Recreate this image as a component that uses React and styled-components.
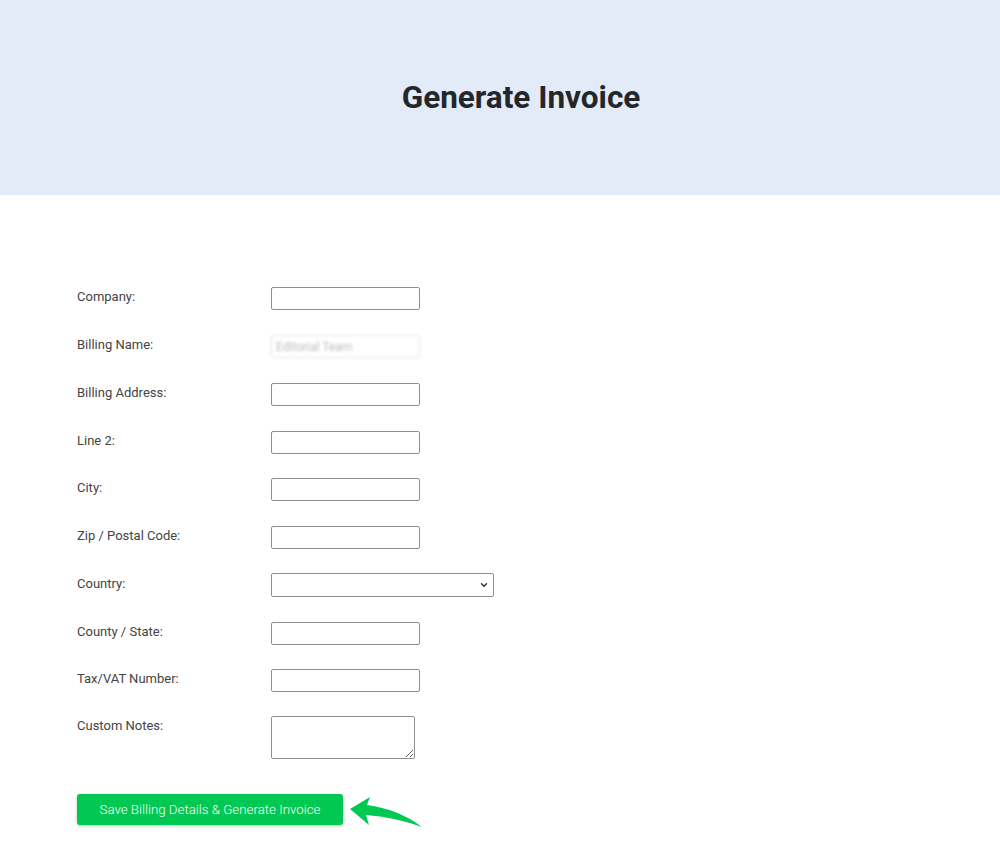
import React from "react";
import styled, { createGlobalStyle } from "styled-components";
import { ChevronDown } from "lucide-react";

const fields = [
  { label: "Company:", type: "input" },
  { label: "Billing Name:", type: "blurred" },
  { label: "Billing Address:", type: "input" },
  { label: "Line 2:", type: "input" },
  { label: "City:", type: "input" },
  { label: "Zip / Postal Code:", type: "input" },
  { label: "Country:", type: "select" },
  { label: "County / State:", type: "input" },
  { label: "Tax/VAT Number:", type: "input" },
  { label: "Custom Notes:", type: "textarea" },
];

const App = () => {
  return (
    <>
      <GlobalStyle />
      <Header>
        <Title>Generate Invoice</Title>
      </Header>
      <Form onSubmit={(e) => e.preventDefault()}>
        {fields.map((f) => (
          <Row key={f.label} top={f.type === "textarea"}>
            <Label top={f.type === "textarea"}>{f.label}</Label>
            {f.type === "input" && <TextInput />}
            {f.type === "blurred" && <BlurInput defaultValue="Editorial Team" />}
            {f.type === "select" && (
              <SelectWrap>
                <Select>
                  <option></option>
                </Select>
                <Chevron size={10} strokeWidth={3.5} />
              </SelectWrap>
            )}
            {f.type === "textarea" && <TextArea />}
          </Row>
        ))}
        <ButtonRow>
          <SaveBtn type="submit">Save Billing Details &amp; Generate Invoice</SaveBtn>
          {/* pointing arrow */}
          <svg width="80" height="40" viewBox="0 0 80 40">
            <path
              d="M4 19 L24 7 L21 15 Q52 19 76 37 Q48 27 20 25 L23 35 Z"
              fill="#00c853"
            />
          </svg>
        </ButtonRow>
      </Form>
    </>
  );
};

const GlobalStyle = createGlobalStyle`
  body {
    margin: 0;
    background: #fff;
    font-family: Roboto, "Liberation Sans", sans-serif;
  }
`;
const Header = styled.header`
  display: flex;
  justify-content: center;
  align-items: center;
  height: 195px;
  background-color: #e3eaf8;
`;
const Title = styled.h1`
  margin: 0 0 0 42px;
  font-size: 31.5px;
  font-weight: 700;
  color: #23272b;
`;
const Form = styled.form`
  display: flex;
  flex-direction: column;
  padding: 80px 0 40px 77px;
`;
const Row = styled.div`
  display: grid;
  grid-template-columns: 194px auto;
  align-items: ${(p) => (p.top ? "start" : "center")};
  height: ${(p) => (p.top ? "54px" : "47.75px")};
  padding-top: ${(p) => (p.top ? "11px" : "0")};
  box-sizing: border-box;
`;
const Label = styled.label`
  font-size: 13px;
  color: #444;
  margin-top: ${(p) => (p.top ? "2px" : "-4px")};
`;
const TextInput = styled.input`
  box-sizing: border-box;
  width: 149px;
  height: 23px;
  border: 1px solid #8f8f8f;
  border-radius: 2px;
  padding: 0 4px;
  font: 12px Roboto, sans-serif;
`;
const BlurInput = styled(TextInput)`
  border-color: #e2e2e2;
  color: #bbb;
  filter: blur(1.5px);
`;
const SelectWrap = styled.div`
  position: relative;
  width: 223px;
  height: 24px;
`;
const Select = styled.select`
  box-sizing: border-box;
  width: 223px;
  height: 24px;
  border: 1px solid #8f8f8f;
  border-radius: 2px;
  background: #fff;
  appearance: none;
`;
const Chevron = styled(ChevronDown)`
  position: absolute;
  right: 5px;
  top: 7px;
  color: #333;
  pointer-events: none;
`;
const TextArea = styled.textarea`
  display: block;
  box-sizing: border-box;
  width: 144px;
  height: 43px;
  border: 1px solid #8f8f8f;
  border-radius: 2px;
  resize: both;
`;
const ButtonRow = styled.div`
  display: flex;
  align-items: center;
  gap: 3px;
  margin-top: 31px;
`;
const SaveBtn = styled.button`
  width: 266px;
  height: 31px;
  padding: 0;
  border: none;
  border-radius: 3px;
  background: #00c853;
  box-shadow: 0 1px 3px rgba(0, 0, 0, 0.25);
  font: 300 13.3px Roboto, sans-serif;
  color: #f4fff7;
  cursor: pointer;
`;

export default App;
